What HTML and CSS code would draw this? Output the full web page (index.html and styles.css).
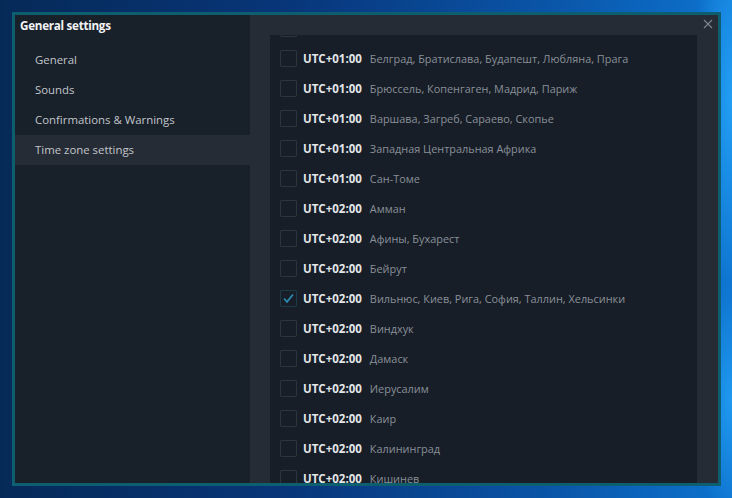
FILE: index.html
```html
<!DOCTYPE html>
<html>
<head>
<meta charset="utf-8">
<link rel="stylesheet" href="styles.css">
</head>
<body>
<div class="desktop">
  <div class="window">
    <aside class="sidebar">
      <div class="title">General settings</div>
      <nav class="nav">
        <div class="nav-item">General</div>
        <div class="nav-item">Sounds</div>
        <div class="nav-item">Confirmations &amp; Warnings</div>
        <div class="nav-item active">Time zone settings</div>
      </nav>
    </aside>
    <main class="main">
      <div class="list">
        <div class="rows">
          <div class="row"><span class="cb"></span><span class="utc">UTC+01:00</span></div>
          <div class="row"><span class="cb"></span><span class="utc">UTC+01:00</span><span class="city">Белград, Братислава, Будапешт, Любляна, Прага</span></div>
          <div class="row"><span class="cb"></span><span class="utc">UTC+01:00</span><span class="city">Брюссель, Копенгаген, Мадрид, Париж</span></div>
          <div class="row"><span class="cb"></span><span class="utc">UTC+01:00</span><span class="city">Варшава, Загреб, Сараево, Скопье</span></div>
          <div class="row"><span class="cb"></span><span class="utc">UTC+01:00</span><span class="city">Западная Центральная Африка</span></div>
          <div class="row"><span class="cb"></span><span class="utc">UTC+01:00</span><span class="city">Сан-Томе</span></div>
          <div class="row"><span class="cb"></span><span class="utc">UTC+02:00</span><span class="city">Амман</span></div>
          <div class="row"><span class="cb"></span><span class="utc">UTC+02:00</span><span class="city">Афины, Бухарест</span></div>
          <div class="row"><span class="cb"></span><span class="utc">UTC+02:00</span><span class="city">Бейрут</span></div>
          <div class="row"><span class="cb checked"><svg width="13" height="13" viewBox="0 0 13 13"><path d="M2 6.5 L5 9.8 L11 2.5" fill="none" stroke="#2a8ab0" stroke-width="1.8"/></svg></span><span class="utc">UTC+02:00</span><span class="city">Вильнюс, Киев, Рига, София, Таллин, Хельсинки</span></div>
          <div class="row"><span class="cb"></span><span class="utc">UTC+02:00</span><span class="city">Виндхук</span></div>
          <div class="row"><span class="cb"></span><span class="utc">UTC+02:00</span><span class="city">Дамаск</span></div>
          <div class="row"><span class="cb"></span><span class="utc">UTC+02:00</span><span class="city">Иерусалим</span></div>
          <div class="row"><span class="cb"></span><span class="utc">UTC+02:00</span><span class="city">Каир</span></div>
          <div class="row"><span class="cb"></span><span class="utc">UTC+02:00</span><span class="city">Калининград</span></div>
          <div class="row"><span class="cb"></span><span class="utc">UTC+02:00</span><span class="city">Кишинев</span></div>
        </div>
      </div>
    </main>
    <div class="close"><svg width="10" height="10" viewBox="0 0 10 10"><path d="M1 1 L9 9 M9 1 L1 9" stroke="#7b828a" stroke-width="1.2"/></svg></div>
  </div>
</div>
</body>
</html>
```
FILE: styles.css
```css
html, body {
  margin: 0;
  padding: 0;
  width: 732px;
  height: 498px;
  overflow: hidden;
}
.desktop {
  width: 732px;
  height: 498px;
  padding: 12px 0 0 12px;
  box-sizing: border-box;
  background:
    radial-gradient(ellipse 40px 200px at 732px 100px, rgba(40,170,255,0.8), rgba(40,170,255,0) 100%),
    radial-gradient(ellipse 40px 120px at 732px 400px, rgba(40,170,255,0.7), rgba(40,170,255,0) 100%),
    linear-gradient(172deg, rgba(0,0,0,0) 0%, rgba(0,0,0,0) 100%),
    linear-gradient(90deg, #062a58 0%, #08367a 40%, #0a55a8 75%, #0d73cf 100%);
  font-family: "Open Sans", "Noto Sans", sans-serif;
}
.window {
  position: relative;
  width: 709px;
  height: 474px;
  box-sizing: border-box;
  border: 3px solid #0d5e6e;
  display: flex;
  background: #262c35;
}
.sidebar {
  width: 235px;
  flex: none;
  background: #18202a;
  display: flex;
  flex-direction: column;
}
.title {
  height: 20px;
  line-height: 20px;
  padding-left: 5px;
  font-size: 11.7px;
  font-weight: 700;
  color: #f2f3f4;
  letter-spacing: -0.3px;
}
.nav {
  margin-top: 10px;
}
.nav-item {
  height: 30px;
  line-height: 30px;
  padding-left: 20px;
  font-size: 11.4px;
  color: #c2c6cb;
}
.nav-item.active {
  background: #262c35;
}
.main {
  flex: 1;
  padding: 20px 21px 0 20px;
  display: flex;
  min-width: 0;
}
.list {
  flex: 1;
  background: #171e27;
  overflow: hidden;
}
.rows {
  margin-top: -22px;
}
.row {
  height: 30px;
  display: flex;
  align-items: center;
  padding-left: 10px;
  white-space: nowrap;
}
.cb {
  width: 17px;
  height: 17px;
  box-sizing: border-box;
  border: 1px solid #2c343e;
  border-radius: 1px;
  margin-right: 6px;
  display: flex;
  align-items: center;
  justify-content: center;
  flex: none;
}
.cb.checked {
  border-color: #1e3a48;
}
.utc {
  font-size: 11.5px;
  font-weight: 700;
  color: #e3e6e9;
  margin-right: 8px;
}
.city {
  font-size: 10.9px;
  color: #8a9099;
}
.close {
  position: absolute;
  right: 5px;
  top: 4px;
  width: 10px;
  height: 10px;
}
.close svg { display: block; }
```
